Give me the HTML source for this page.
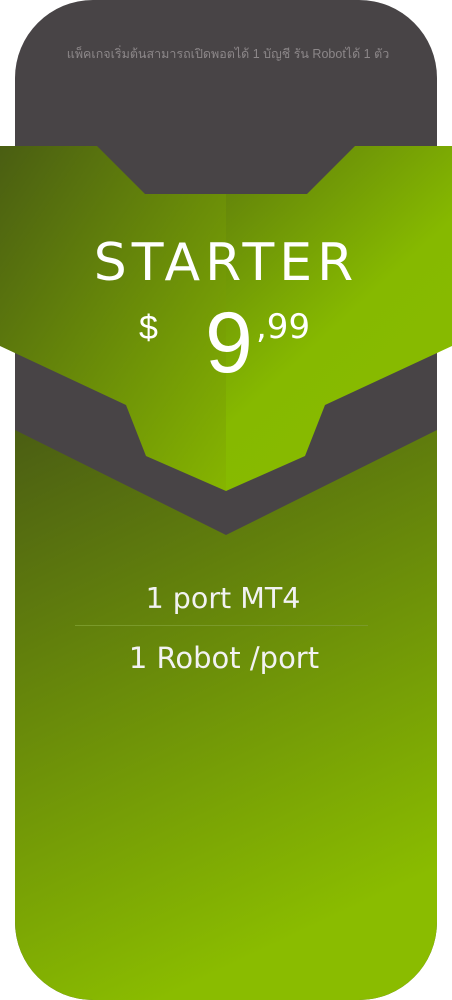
<!DOCTYPE html>
<html><head><meta charset="utf-8"><style>
html,body{margin:0;padding:0;background:#fff;width:452px;height:1000px;overflow:hidden}
svg{display:block}
</style></head><body>
<svg width="452" height="1000" viewBox="0 0 452 1000" xmlns="http://www.w3.org/2000/svg">
<defs>
<linearGradient id="bot" x1="0" y1="0" x2="0.35" y2="1">
<stop offset="0" stop-color="#4b5e13"/>
<stop offset="1" stop-color="#8abc00"/>
</linearGradient>
<linearGradient id="gl" x1="0" y1="0" x2="1" y2="1">
<stop offset="0" stop-color="#4a5e12"/>
<stop offset="1" stop-color="#86b500"/>
</linearGradient>
<linearGradient id="gr" x1="0" y1="0" x2="0.6" y2="1">
<stop offset="0" stop-color="#5e7c0c"/>
<stop offset="0.6" stop-color="#86b900"/>
<stop offset="1" stop-color="#88bb00"/>
</linearGradient>
<clipPath id="card"><rect x="15" y="0" width="422" height="1000" rx="78" ry="78"/></clipPath>
</defs>
<g clip-path="url(#card)">
<rect x="15" y="0" width="422" height="1000" fill="#484446"/>
<path d="M15 430 L226 535 L437 430 L437 1000 L15 1000 Z" fill="url(#bot)"/>
</g>
<path d="M0 146 L97 146 L145 194 L226 194 L226 491 L146 456 L126 405 L0 346 Z" fill="url(#gl)"/>
<path d="M226 194 L307 194 L355 146 L452 146 L452 346 L325 405 L305 456 L226 491 Z" fill="url(#gr)"/>
<text x="228" y="58" text-anchor="middle" font-family="'Liberation Sans','Noto Sans CJK SC',sans-serif" font-size="12.5" fill="#8c8789">แพ็คเกจเริ่มต้นสามารถเปิดพอตได้ 1 บัญชี รัน Robotได้ 1 ตัว</text>
<text x="226" y="280" text-anchor="middle" font-family="'DejaVu Sans','Liberation Sans',sans-serif" font-size="52" letter-spacing="5" fill="#fff">STARTER</text>
<text x="139" y="339" font-family="'Liberation Sans',sans-serif" font-size="34" fill="#fff">$</text>
<text x="205" y="372" font-family="'Liberation Sans',sans-serif" font-size="86" fill="#fff">9</text>
<text x="256" y="338" font-family="'DejaVu Sans','Liberation Sans',sans-serif" font-size="34" fill="#fff">,99</text>
<text x="223" y="608" text-anchor="middle" font-family="'DejaVu Sans','Liberation Sans',sans-serif" font-size="28.5" fill="#f2f2f2">1 port MT4</text>
<line x1="75" y1="625.5" x2="368" y2="625.5" stroke="#7a9a2a" stroke-width="1"/>
<text x="224" y="668" text-anchor="middle" font-family="'DejaVu Sans','Liberation Sans',sans-serif" font-size="29" fill="#f2f2f2">1 Robot /port</text>
</svg>
</body></html>
